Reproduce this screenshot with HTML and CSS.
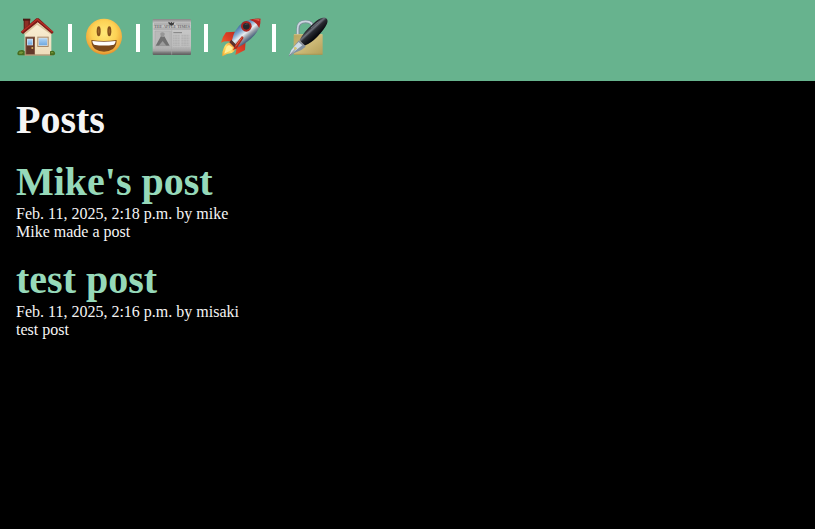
FILE: index.html
```html
<!DOCTYPE html>
<html lang="en">
<head>
<meta charset="utf-8">
<meta name="viewport" content="width=device-width, initial-scale=1">
<title>Posts</title>
<link rel="stylesheet" href="styles.css">
</head>
<body>
<header class="site-header">
  <nav class="nav">
    <a class="nav-link" href="#" aria-label="Home">
      <svg class="icon" viewBox="0 0 120 120" aria-hidden="true">
        <defs>
          <linearGradient id="wall" x1="0" y1="0" x2="0" y2="1"><stop offset="0" stop-color="#fbf0d6"/><stop offset="1" stop-color="#ecdcba"/></linearGradient>
          <linearGradient id="glass" x1="0" y1="0" x2="0" y2="1"><stop offset="0" stop-color="#b0d5f5"/><stop offset="1" stop-color="#6fa8e0"/></linearGradient>
        </defs>
        <path fill="#6b231b" d="M23 8h19v32H23z"/><path fill="#8c3026" d="M27 8h10v32H27z"/><path fill="#4b1813" d="M21 5h22v6H21z"/>
        <path fill="url(#wall)" d="M26 44 63 11l43 33v71H26z"/>
        <path fill="#d9c59c" d="M26 48 63 17l43 31v5L63 23 26 54z"/>
        <path fill="#7d1b17" d="M61 4h7l45 41-5 6-43-35-44 35-7-6z"/>
        <path fill="none" stroke="#b93028" stroke-width="4" d="m17 45 47-38 46 38"/>
        <path fill="#845a44" d="M28 59h29v55H28z"/><path fill="#63382a" d="M31 62h23v50H31z"/>
        <path fill="#d5e3ef" d="M33 65h18v20H33z"/><path fill="url(#glass)" d="M35 67h14v16H35z"/>
        <circle cx="49" cy="93" r="3" fill="#d7b45e"/>
        <path fill="#a98a68" d="M64 59h34v31H64z"/><path fill="#e6e6e2" d="M67 62h28v25H67z"/><path fill="url(#glass)" d="M69 64h24v21H69z"/>
        <path fill="#ad9572" d="M25 112h83v4H25z"/>
        <path fill="#486c1f" d="M4 110q1-9 10-10 6-3 12 3v12H8q-4-1-4-5M102 103q10-5 14 2 4 7-3 10h-11z"/>
        <path fill="#78963a" d="M10 105q6-4 12 1l-4 4H9zM105 106q6-3 8 3h-8z"/>
      </svg>
    </a>
    <span class="divider"></span>
    <a class="nav-link" href="#" aria-label="Profile">
      <svg class="icon" viewBox="0 0 120 120" aria-hidden="true">
        <defs>
          <radialGradient id="face" cx=".5" cy=".4" r=".62"><stop offset="0" stop-color="#ffe878"/><stop offset=".55" stop-color="#fdd255"/><stop offset=".85" stop-color="#f0ab3c"/><stop offset="1" stop-color="#dc882c"/></radialGradient>
        </defs>
        <circle cx="60" cy="59" r="54" fill="url(#face)"/>
        <ellipse cx="44" cy="43" rx="6" ry="15" fill="#84511a"/><ellipse cx="76" cy="43" rx="6" ry="15" fill="#84511a"/>
        <ellipse cx="44" cy="43" rx="2" ry="7" fill="#a0692a"/><ellipse cx="76" cy="43" rx="2" ry="7" fill="#a0692a"/>
        <path fill="#7c4a1c" d="M22 69q38 6 76 0 0 17-11 27-12 8-27 8t-27-8Q22 86 22 69"/>
        <path fill="#fff" d="M25 72q35 5 70 0-1 9-5 11-30 5-60 0-4-2-5-11"/>
      </svg>
    </a>
    <span class="divider"></span>
    <a class="nav-link" href="#" aria-label="Posts">
      <svg class="icon" viewBox="0 0 120 120" aria-hidden="true">
        <defs>
          <linearGradient id="paper" x1="0" y1="0" x2="0" y2="1"><stop offset="0" stop-color="#858585"/><stop offset=".12" stop-color="#c8c8c8"/><stop offset=".75" stop-color="#c0c0c0"/><stop offset=".87" stop-color="#aaa"/><stop offset=".94" stop-color="#777"/><stop offset="1" stop-color="#5d5d5d"/></linearGradient>
        </defs>
        <rect x="2" y="6" width="115" height="108" rx="3" fill="url(#paper)"/>
        <path stroke="#858585" stroke-width="2" d="M6 21h43M71 21h44M5 36h111"/>
        <path fill="#3c3c3c" d="m49 14 7 4 3-4 2 5 6-4-2 8-4 2-2 3-4-4-5-2z"/>
        <text class="masthead" x="60" y="33" text-anchor="middle">THE APPLE TIMES</text>
        <path fill="#b9b9b9" stroke="#9c9c9c" d="M9 42h46v47H9z"/>
        <path fill="#707070" d="m11 86 16-29 5 3 5-2 16 28z"/><path fill="#969696" d="M26 56q-4-10 6-10 10 2 4 11l-4 4z"/>
        <path fill="#9c9c9c" d="m20 86 12-14 11 14z"/>
        <path stroke="#808080" stroke-width="3" d="M64 47h26"/>
        <path stroke="#a8a8a8" stroke-width="2" stroke-dasharray="5 1 8 1" d="M63 55h20M63 60h20M63 65h20M63 70h20M63 75h20M63 80h20M63 85h20M88 55h24M88 60h24M88 65h24M88 70h24M88 75h24M88 80h24M88 85h24M8 93h48M63 93h50"/>
        <path stroke="#a3a3a3" stroke-width="2" d="M59 40v73M3 99h114"/>
      </svg>
    </a>
    <span class="divider"></span>
    <a class="nav-link" href="#" aria-label="Launch">
      <svg class="icon" viewBox="0 0 120 120" aria-hidden="true">
        <defs>
          <linearGradient id="hull" gradientUnits="userSpaceOnUse" x1="56" y1="26" x2="88" y2="66"><stop offset="0" stop-color="#426f9d"/><stop offset=".3" stop-color="#7aa5cf"/><stop offset=".58" stop-color="#e9edf0"/><stop offset=".78" stop-color="#99a1aa"/><stop offset="1" stop-color="#4d6680"/></linearGradient>
          <linearGradient id="fin" x1="1" y1="0" x2="0" y2="1"><stop offset="0" stop-color="#a92219"/><stop offset=".5" stop-color="#df4026"/><stop offset="1" stop-color="#f88c32"/></linearGradient>
          <linearGradient id="flame" x1="1" y1="0" x2="0" y2="1"><stop offset="0" stop-color="#f5681c"/><stop offset=".5" stop-color="#ffe269"/><stop offset="1" stop-color="#f6a52c"/></linearGradient>
        </defs>
        <path fill="url(#fin)" d="M46 44 18 46Q8 58 3 77q14-7 33-3zM77 72l-2 27-29 15q4-14 3-29z"/>
        <path fill="url(#flame)" d="m30 76 16 13q0 14-11 19-14 1-28 10-2-12 4-24 5-16 19-18"/>
        <path fill="#fff09a" d="m27 84 12 8q-3 9-12 11l-14 7 4-13q2-10 10-13"/>
        <path fill="#5b302b" d="m34 68 20 19-6 9-20-20z"/>
        <path fill="url(#hull)" d="M36 70Q42 37 67 17 86 4 121 7q1 26-18 48-19 22-48 35z"/>
        <path fill="#b52620" d="M88 8q17-4 34-3 0 14-4 28-8-18-30-25"/><path fill="#e56658" d="M98 8q10-2 20-1v5q-8-4-20-4"/>
        <circle cx="79" cy="28" r="16" fill="#a9241f"/><circle cx="79" cy="28" r="10" fill="#24272d"/><path fill="#56616b" d="M73 24q6-8 13-2-7-1-13 2"/>
        <path fill="#b3261c" d="m66 57 5 5-20 31-12 7 9-20z"/><path stroke="#e86342" stroke-width="3" d="M66 61 47 88"/>
      </svg>
    </a>
    <span class="divider"></span>
    <a class="nav-link" href="#" aria-label="Sign in">
      <svg class="icon" viewBox="0 0 120 120" aria-hidden="true">
        <defs>
          <linearGradient id="brass" x1="0" y1="0" x2="1" y2="1"><stop offset="0" stop-color="#b7a45f"/><stop offset=".5" stop-color="#cebb78"/><stop offset="1" stop-color="#b39e58"/></linearGradient>
          <linearGradient id="pen" gradientUnits="userSpaceOnUse" x1="62" y1="36" x2="83" y2="59"><stop offset="0" stop-color="#22242a"/><stop offset=".25" stop-color="#70747e"/><stop offset=".45" stop-color="#292b32"/><stop offset="1" stop-color="#090a0e"/></linearGradient>
        </defs>
        <path fill="none" stroke="#7c8c99" stroke-width="10" d="M30 55V35q0-21 23-21t23 21v20"/>
        <path fill="none" stroke="#cbd6df" stroke-width="5" d="M29 55V35q0-22 24-22 22 0 22 22v20"/>
        <rect x="17" y="52" width="87" height="61" rx="2" fill="url(#brass)"/>
        <path stroke="#a58f4d" stroke-width="2" d="M18 112h85"/>
        <path stroke="#dccb8c" stroke-width="2" d="M18 53h85"/>
        <path fill="#8292a0" d="M33 70 53 89 40 99 19 108 2 119 8 101 20 85z"/>
        <path fill="#cfdce5" d="m32 75 11 10-21 16-19 15 7-17 12-14z"/><path stroke="#5d6b74" stroke-width="2" d="M4 116 25 93"/><circle cx="22" cy="94" r="4" fill="#d9c86c"/>
        <path fill="url(#pen)" d="M35 69q12-24 37-46Q96 0 112 2q10 4 5 18-8 17-29 39-18 19-39 27z"/>
        <path stroke="#8d929c" stroke-width="4" d="m33 72 18 16"/>
        <path fill="none" stroke="#696e78" stroke-width="3" stroke-linecap="round" d="M70 32Q88 14 102 9"/>
      </svg>
    </a>
  </nav>
</header>
<main class="content">
  <h1 class="heading">Posts</h1>
  <article class="post">
    <h2 class="heading"><a class="post-link" href="#">Mike's post</a></h2>
    <p class="text">Feb. 11, 2025, 2:18 p.m. by mike</p>
    <p class="text">Mike made a post</p>
  </article>
  <article class="post">
    <h2 class="heading"><a class="post-link" href="#">test post</a></h2>
    <p class="text">Feb. 11, 2025, 2:16 p.m. by misaki</p>
    <p class="text">test post</p>
  </article>
</main>
</body>
</html>
```
FILE: styles.css
```css
* {
  box-sizing: border-box;
}

body {
  margin: 0;
  background: #000;
  color: #f5f5f5;
  font-family: "Liberation Serif", "Times New Roman", serif;
  font-size: 16px;
  line-height: 18px;
}

.site-header {
  padding: 17px 16px 24px;
  background: #67b38e;
}

.nav {
  display: flex;
  align-items: flex-end;
  gap: 12px;
}

.nav-link,
.icon {
  display: block;
}

.icon {
  width: 40px;
  height: 40px;
  overflow: visible;
}

.masthead {
  fill: #707070;
  font-size: 12px;
  font-weight: bold;
}

.divider {
  width: 4px;
  height: 28px;
  margin-bottom: 5px;
  background: #fff;
}

.content {
  display: flex;
  flex-direction: column;
  gap: 16px;
  padding: 16px;
}

.heading {
  margin: 0;
  font-size: 40px;
  line-height: 46px;
}

.post-link {
  color: #96d9b9;
  text-decoration: none;
}

.text {
  margin: 0;
}
```
